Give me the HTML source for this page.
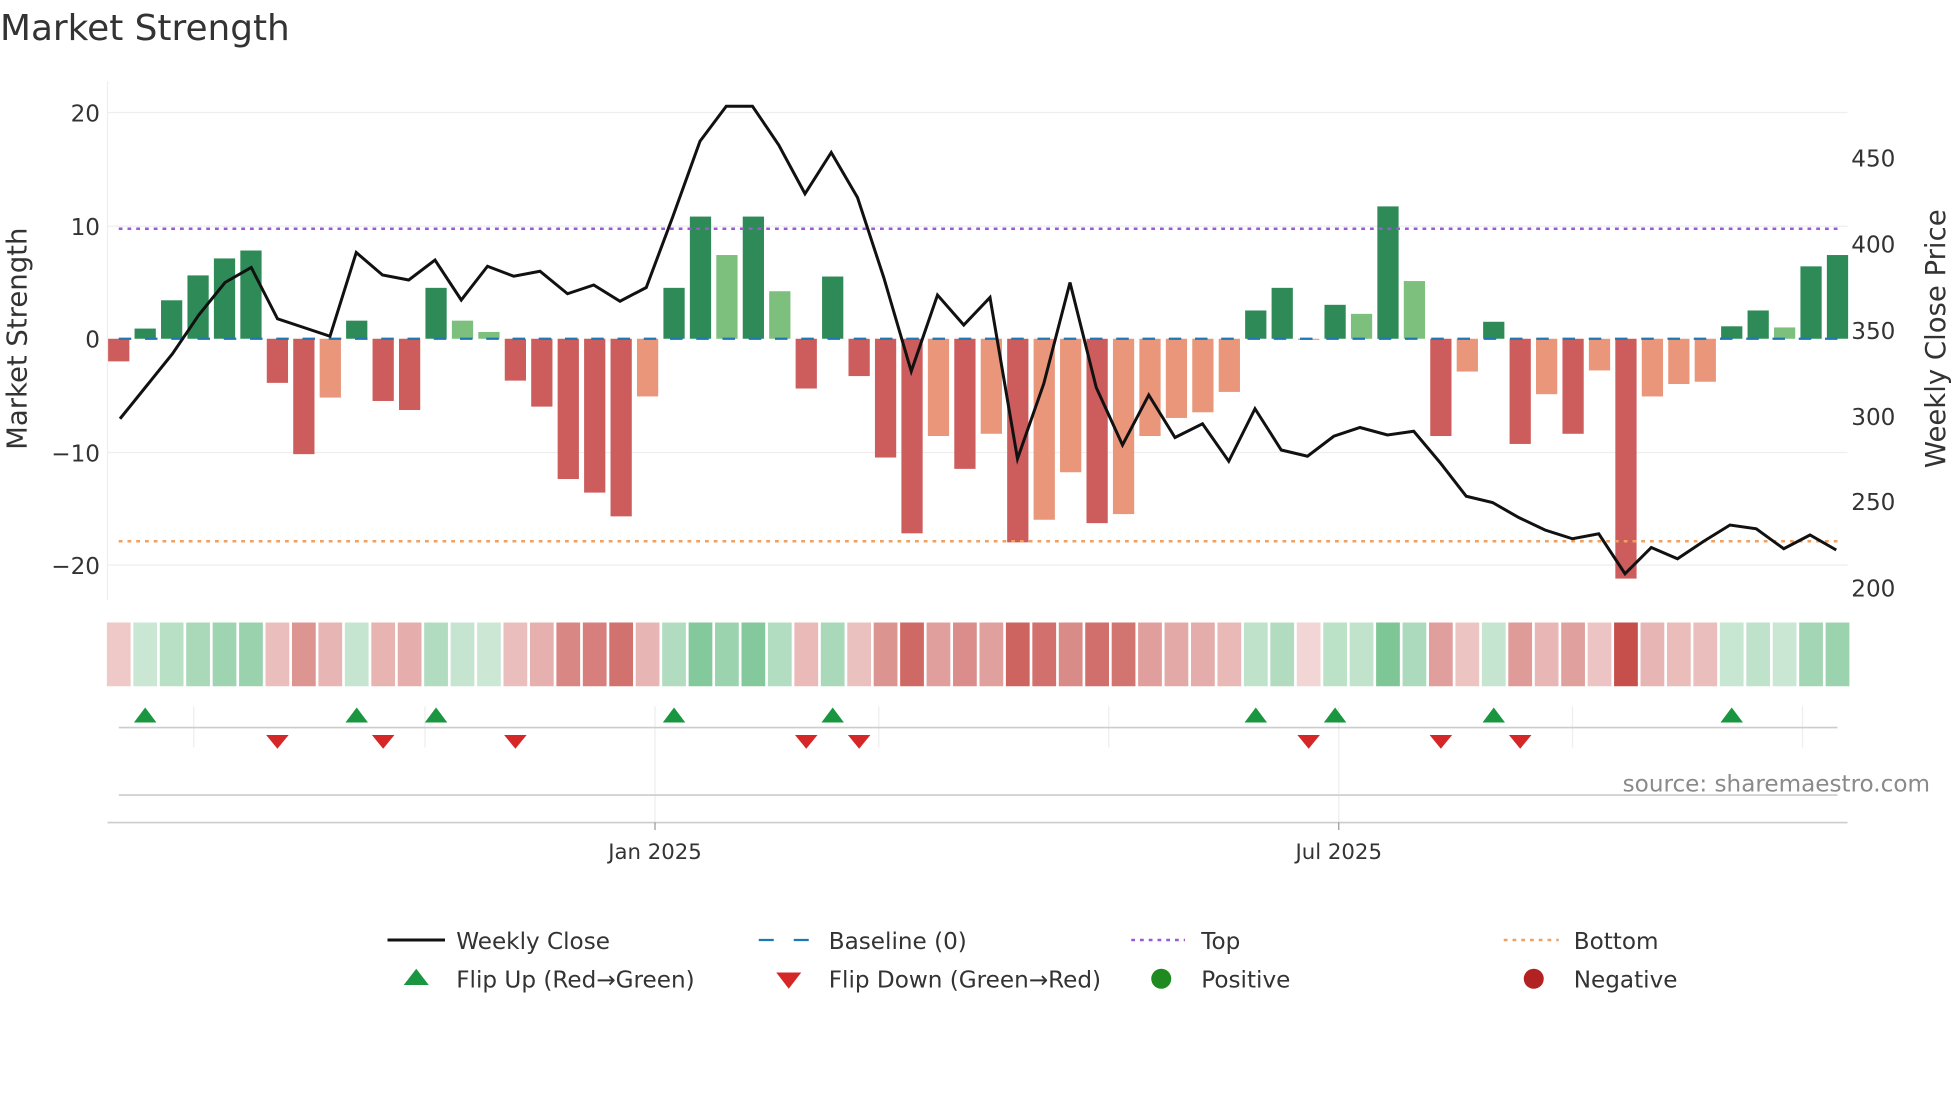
<!DOCTYPE html>
<html><head><meta charset="utf-8"><style>
html,body{margin:0;padding:0;background:#fff;}
svg{display:block;font-family:"DejaVu Sans","Liberation Sans",sans-serif;}
</style></head><body>
<svg id="s" width="1960" height="1102" viewBox="0 0 1568 881.6" xmlns="http://www.w3.org/2000/svg">
<text x="0" y="32" font-size="28.7" fill="#333">Market Strength</text>
<g stroke="#eeeeee" stroke-width="1">
<line x1="86" x2="1478" y1="90" y2="90"/><line x1="86" x2="1478" y1="181" y2="181"/>
<line x1="86" x2="1478" y1="362" y2="362"/><line x1="86" x2="1478" y1="452" y2="452"/>
<line x1="86" x2="86" y1="65" y2="480"/>
</g>
<g font-size="18.5" fill="#333" text-anchor="end">
<text x="80" y="97">20</text><text x="80" y="188">10</text><text x="80" y="278">0</text>
<text x="80" y="369">−10</text><text x="80" y="459">−20</text>
</g>
<g font-size="18.5" fill="#333">
<text x="1481" y="133">450</text><text x="1481" y="202">400</text><text x="1481" y="271">350</text>
<text x="1481" y="340">300</text><text x="1481" y="408">250</text><text x="1481" y="477">200</text>
</g>
<text transform="translate(21,271) rotate(-90)" font-size="22" fill="#333" text-anchor="middle">Market Strength</text>
<text transform="translate(1556,271) rotate(-90)" font-size="22" fill="#333" text-anchor="middle">Weekly Close Price</text>
<g id="bars"></g>
<line x1="95" x2="1470" y1="271" y2="271" stroke="#1f77b4" stroke-width="1.8" stroke-dasharray="10,11"/>
<line x1="95" x2="1470" y1="183" y2="183" stroke="#9b59d6" stroke-width="2" stroke-dasharray="3,4"/>
<line x1="95" x2="1470" y1="433" y2="433" stroke="#f0a060" stroke-width="2" stroke-dasharray="3,4"/>
<polyline id="price" fill="none" stroke="#111" stroke-width="2.4" stroke-linejoin="miter"/>
<g id="strip"></g>
<g stroke="#eeeeee" stroke-width="1">
<line x1="155" x2="155" y1="565" y2="598"/><line x1="340" x2="340" y1="565" y2="598"/>
<line x1="524" x2="524" y1="565" y2="660"/><line x1="703" x2="703" y1="565" y2="598"/>
<line x1="887" x2="887" y1="565" y2="598"/><line x1="1071" x2="1071" y1="565" y2="660"/>
<line x1="1258" x2="1258" y1="565" y2="598"/><line x1="1442" x2="1442" y1="565" y2="598"/>
</g>
<line x1="95" x2="1470" y1="582" y2="582" stroke="#cccccc" stroke-width="1.3"/>
<line x1="95" x2="1470" y1="636" y2="636" stroke="#cccccc" stroke-width="1.3"/>
<line x1="86" x2="1478" y1="658" y2="658" stroke="#cccccc" stroke-width="1.3"/>
<line x1="524" x2="524" y1="658" y2="664" stroke="#999"/><line x1="1071" x2="1071" y1="658" y2="664" stroke="#999"/>
<g id="marks"></g>
<g font-size="17" fill="#333" text-anchor="middle">
<text x="524" y="687">Jan 2025</text><text x="1071" y="687">Jul 2025</text>
</g>
<text x="1544" y="633" font-size="18.5" fill="#8a8a8a" text-anchor="end">source: sharemaestro.com</text>
<g font-size="18.5" fill="#333">
<line x1="310" x2="356" y1="752" y2="752" stroke="#111" stroke-width="2.4"/>
<text x="365" y="759">Weekly Close</text>
<line x1="607" x2="651" y1="752" y2="752" stroke="#1f77b4" stroke-width="1.8" stroke-dasharray="12,16"/>
<text x="663" y="759">Baseline (0)</text>
<line x1="905" x2="948" y1="752" y2="752" stroke="#9b59d6" stroke-width="2" stroke-dasharray="3,4"/>
<text x="961" y="759">Top</text>
<line x1="1203" x2="1247" y1="752" y2="752" stroke="#f0a060" stroke-width="2" stroke-dasharray="3,4"/>
<text x="1259" y="759">Bottom</text>
<polygon points="323,788 343,788 333,775" fill="#1a9641"/>
<text x="365" y="790">Flip Up (Red→Green)</text>
<polygon points="621,778 641,778 631,791" fill="#d62728"/>
<text x="663" y="790">Flip Down (Green→Red)</text>
<circle cx="929" cy="783" r="8" fill="#1f8a1f"/>
<text x="961" y="790">Positive</text>
<circle cx="1227" cy="783" r="8" fill="#b22222"/>
<text x="1259" y="790">Negative</text>
</g>
</svg>
<script>
var v=[-2,0.9,3.4,5.6,7.1,7.8,-3.9,-10.2,-5.2,1.6,-5.5,-6.3,4.5,1.6,0.6,-3.7,-6,-12.4,-13.6,-15.7,-5.1,4.5,10.8,7.4,10.8,4.2,-4.4,5.5,-3.3,-10.5,-17.2,-8.6,-11.5,-8.4,-18,-16,-11.8,-16.3,-15.5,-8.6,-7,-6.5,-4.7,2.5,4.5,-0.1,3,2.2,11.7,5.1,-8.6,-2.9,1.5,-9.3,-4.9,-8.4,-2.8,-21.2,-5.1,-4,-3.8,1.1,2.5,1,6.4,7.4];
var light={8:1,13:1,14:1,20:1,23:1,25:1,31:1,33:1,35:1,36:1,38:1,39:1,40:1,41:1,42:1,45:1,47:1,49:1,51:1,54:1,56:1,58:1,59:1,60:1,63:1};
var NS="http://www.w3.org/2000/svg";
function el(t,a,p){var e=document.createElementNS(NS,t);for(var k in a)e.setAttribute(k,a[k]);document.getElementById(p).appendChild(e);}
var step=(1470-95)/65;
for(var i=0;i<66;i++){
 var cx=95+i*step,val=v[i],y0=271,h=val*9.05;
 var col=val>=0?(light[i]?"#7dbf7d":"#2e8b57"):(light[i]?"#e9967a":"#cd5c5c");
 el("rect",{x:cx-8.5,y:val>=0?y0-h:y0,width:17,height:Math.max(Math.abs(h),0.8),fill:col},"bars");
 var c;
 if(val>=0){var a=0.22+val/11.7*0.38;c="rgba(40,160,80,"+a+")";}
 else{var a=0.22+(-val)/21.2*0.73;c="rgba(195,70,65,"+a+")";}
 el("rect",{x:cx-9.5,y:498,width:19,height:51,fill:c},"strip");
}
var up=[1,9,12,21,27,43,46,52,61],dn=[6,10,15,26,28,45,50,53];
up.forEach(function(i){var x=95+i*step;el("polygon",{points:(x-9)+",578 "+(x+9)+",578 "+x+",566",fill:"#1a9641"},"marks");});
dn.forEach(function(i){var x=95+i*step;el("polygon",{points:(x-9)+",588 "+(x+9)+",588 "+x+",599",fill:"#d62728"},"marks");});
var p="96,335 117,309 138,283 159,252 180,226 201,214 222,255 243,262 264,269 285,202 306,220 327,224 348,208 369,240 390,213 411,221 432,217 454,235 475,228 496,241 517,230 538,174 560,113 581,85 602,85 623,116 644,155 665,122 686,158 707,222 729,297 750,236 771,260 792,238 814,367 835,307 856,226 877,310 898,356 919,316 940,350 962,339 983,369 1004,327 1025,360 1046,365 1067,349 1088,342 1110,348 1131,345 1152,370 1173,397 1194,402 1215,414 1236,424 1258,431 1279,427 1300,459 1321,438 1342,447 1363,433 1384,420 1405,423 1427,439 1448,428 1469,440";
document.getElementById("price").setAttribute("points",p);
</script>
</body></html>
